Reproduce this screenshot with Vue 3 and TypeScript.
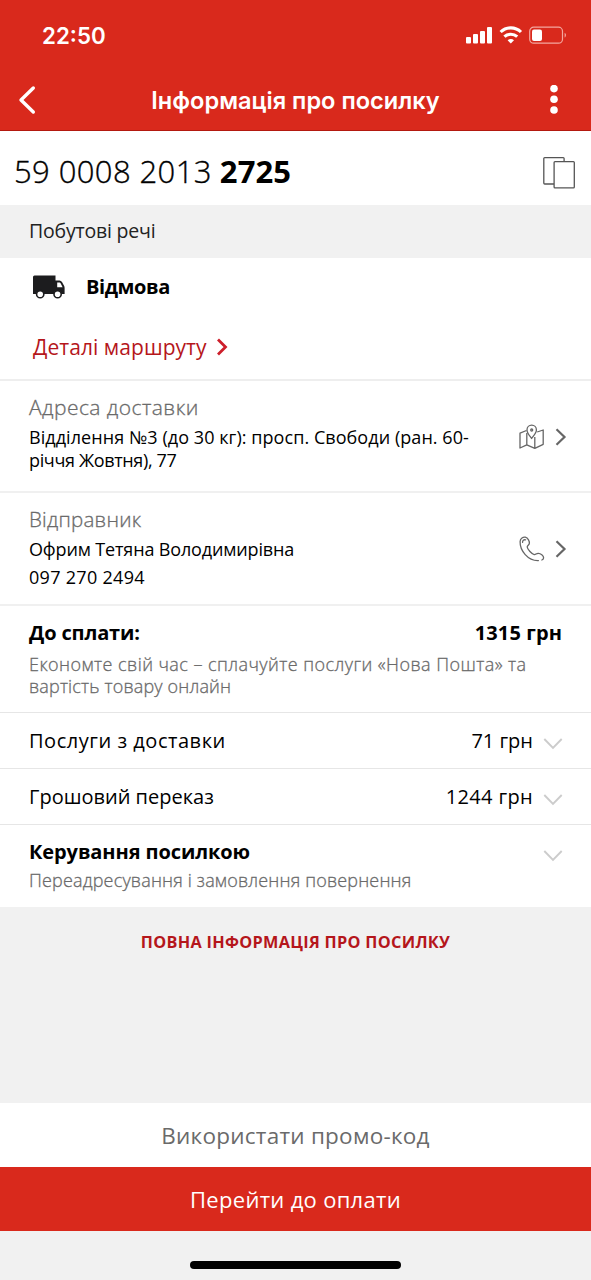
<script setup lang="ts">
interface ChargeRow {
  id: string
  label: string
  amount: string
}

const trackingPrefix = '59 0008 2013'
const trackingSuffix = '2725'

const charges: ChargeRow[] = [
  { id: 'delivery', label: 'Послуги з доставки', amount: '71 грн' },
  { id: 'transfer', label: 'Грошовий переказ', amount: '1244 грн' },
]
</script>

<template>
  <div class="screen">
    <header class="top">
      <div class="statusbar">
        <span class="time">22:50</span>
        <svg class="indicators" width="102" height="20" viewBox="0 0 102 20">
          <g fill="#fff">
            <rect x="1" y="12" width="5" height="6.5" rx="1" />
            <rect x="8" y="9" width="5" height="9.5" rx="1" />
            <rect x="15" y="6" width="5" height="12.5" rx="1" />
            <rect x="22" y="2" width="5" height="16.5" rx="1" />
            <path d="M45.8 18.6l-3.2-3.3a4.6 4.6 0 0 1 6.4 0z" />
          </g>
          <g fill="none" stroke="#fff" stroke-width="3.1">
            <path d="M35.6 7a14.6 14.6 0 0 1 20.4 0" />
            <path d="M39.4 11.7a9.4 9.4 0 0 1 12.8 0" />
          </g>
          <rect x="64.7" y="2.2" width="32.8" height="16" rx="4" fill="none" stroke="#f3a69e" stroke-width="1.2" />
          <rect x="67" y="4.5" width="10" height="11.5" rx="2" fill="#fff" />
          <path d="M99.6 7.8c1.8.7 1.8 4 0 4.8z" fill="#f3a69e" />
        </svg>
      </div>
      <div class="navbar">
        <svg class="back" width="18" height="30" viewBox="0 0 18 30">
          <path d="M15.3 3L3 15l12.3 12" fill="none" stroke="#fff" stroke-width="3.4" stroke-linecap="round" stroke-linejoin="round" />
        </svg>
        <h1 class="title">Інформація про посилку</h1>
        <svg class="more" width="10" height="30" viewBox="0 0 10 30">
          <g fill="#fff">
            <circle cx="5" cy="3.6" r="3.8" />
            <circle cx="5" cy="14.3" r="3.8" />
            <circle cx="5" cy="25" r="3.8" />
          </g>
        </svg>
      </div>
    </header>

    <section class="number">
      <p class="digits"><span class="prefix">{{ trackingPrefix }}</span><b class="suffix">{{ trackingSuffix }}</b></p>
      <svg class="copy" width="34" height="34" viewBox="0 0 34 34" fill="none" stroke="#555" stroke-width="1.3">
        <path d="M12 28H2.7a.9.9 0 0 1-.9-.9V2.6a.9.9 0 0 1 .9-.9h18.5a.9.9 0 0 1 .9.9v3.1" />
        <rect x="12.1" y="5.7" width="20.2" height="26.2" rx=".9" />
      </svg>
    </section>

    <section class="category"><span class="t-category">Побутові речі</span></section>

    <section class="state">
      <div class="state-line">
        <svg width="32" height="24" viewBox="0 0 32 24">
          <path d="M1.5.5H22.5V5.5H26.5Q28 5.5 29 7L31.2 11Q31.6 12 31.6 13V19H0V2Q0 .5 1.5.5z" fill="#1c1c1e" />
          <path d="M24.2 7.5h2.4q.6 0 1 .8l2 3.9h-5.4z" fill="#fff" />
          <circle cx="7.2" cy="19.2" r="3.6" fill="#fff" stroke="#1c1c1e" stroke-width="1.6" />
          <circle cx="24.6" cy="19.2" r="3.6" fill="#fff" stroke="#1c1c1e" stroke-width="1.6" />
        </svg>
        <b class="t-state">Відмова</b>
      </div>
      <div class="route">
        <span class="t-route">Деталі маршруту</span>
        <svg width="12" height="20" viewBox="0 0 12 20">
          <path d="M2 2.5l7.5 7.5L2 17.5" fill="none" stroke="#cd1f2b" stroke-width="2.8" />
        </svg>
      </div>
    </section>

    <section class="party address">
      <div class="party-text">
        <span class="caption t-address">Адреса доставки</span>
        <span class="body t-addr1">Відділення №3 (до 30 кг): просп. Свободи (ран. 60-</span>
        <span class="body t-addr2">річчя Жовтня), 77</span>
      </div>
      <div class="party-icons">
        <svg width="26" height="26" viewBox="0 0 26 26" fill="none" stroke="#666" stroke-width="1.3" stroke-linejoin="round">
          <path d="M7.5 6.5L1 9.2V24l6.8-3.2 8 3.5 8.4-4V6l-6 2M7.8 9v11.8M15.8 13v11.3" />
          <path d="M12.6 14.5C10.5 11.5 8 9 8 5.9a4.7 4.7 0 0 1 9.4 0c0 3.1-2.7 5.6-4.8 8.6z" />
          <circle cx="12.7" cy="6" r="1" />
        </svg>
        <svg width="14" height="20" viewBox="0 0 14 20"><path d="M2.5 2.3l8 7.7-8 7.7" fill="none" stroke="#666" stroke-width="2.2" /></svg>
      </div>
    </section>

    <section class="party sender">
      <div class="party-text">
        <span class="caption t-sender">Відправник</span>
        <span class="body t-name">Офрим Тетяна Володимирівна</span>
        <span class="body t-phone">097 270 2494</span>
      </div>
      <div class="party-icons">
        <svg width="26" height="26" viewBox="0 0 26 26" fill="none" stroke="#666" stroke-width="1.3" stroke-linecap="round" stroke-linejoin="round">
          <path d="M19.4 24.6C9 25 .8 14.5 1.1 5.5C1.2 2.3 4.2.8 6.3 1.2C9 1.8 10.8 5.5 10.3 7.6C10 9.1 8.1 9.6 8.2 11C8.4 13.3 13 18.3 15.2 18.6C16.8 18.8 17.3 17.2 19.3 17.3C21.6 17.4 24.6 19.6 24.6 21.8C24.6 22.7 23.9 23.6 22.9 24" />
          <path d="M3.6 6.3C3.3 4.4 4.8 3.3 6.6 3.9" />
        </svg>
        <svg width="14" height="20" viewBox="0 0 14 20"><path d="M2.5 2.3l8 7.7-8 7.7" fill="none" stroke="#666" stroke-width="2.2" /></svg>
      </div>
    </section>

    <section class="total">
      <div class="total-line">
        <b class="t-total">До сплати:</b>
        <b class="t-sum">1315 грн</b>
      </div>
      <span class="note t-note1">Економте свій час – сплачуйте послуги «Нова Пошта» та</span>
      <span class="note t-note2">вартість товару онлайн</span>
    </section>

    <section v-for="row in charges" :key="row.id" :class="['charge', row.id]">
      <span class="charge-label">{{ row.label }}</span>
      <span class="charge-amount">{{ row.amount }}</span>
      <svg class="down" width="20" height="14" viewBox="0 0 20 14"><path d="M1.3 2l8.7 9L18.7 2" fill="none" stroke="#ccc" stroke-width="1.9" /></svg>
    </section>

    <section class="manage">
      <div class="manage-line">
        <b class="t-manage">Керування посилкою</b>
        <svg class="down" width="20" height="14" viewBox="0 0 20 14"><path d="M1.3 2l8.7 9L18.7 2" fill="none" stroke="#ccc" stroke-width="1.9" /></svg>
      </div>
      <span class="note t-redirect">Переадресування і замовлення повернення</span>
    </section>

    <div class="full"><span class="t-full">ПОВНА ІНФОРМАЦІЯ ПРО ПОСИЛКУ</span></div>

    <button class="promo"><span class="t-promo">Використати промо-код</span></button>
    <button class="pay"><span class="t-pay">Перейти до оплати</span></button>
    <footer class="home"><i class="home-bar"></i></footer>
  </div>
</template>

<style>
body {
  margin: 0;
}
</style>

<style scoped>
.screen {
  display: flex;
  flex-direction: column;
  width: 591px;
  height: 1280px;
  overflow: hidden;
  background: #f1f1f1;
  color: #000;
  font-family: "Open Sans", "Noto Sans", sans-serif;
  font-size: 20px;
  font-weight: 400;
  white-space: nowrap;
}
.screen * {
  box-sizing: border-box;
}
section,
header,
button,
footer {
  flex: none;
}
.top {
  height: 131px;
  background: #d9291c;
  border-bottom: 1px solid #b3190f;
  color: #fff;
  font-family: Inter, sans-serif;
}
.statusbar {
  display: flex;
  justify-content: space-between;
  height: 70px;
  padding: 25px 24px 0 42px;
}
.time {
  font-size: 22.3px;
  font-weight: 600;
  line-height: 22px;
}
.navbar {
  display: flex;
  align-items: center;
  justify-content: space-between;
  height: 60px;
  padding: 0 32px 0 18px;
}
.title {
  margin: 2px 0 0 6px;
  font-size: 23.6px;
  font-weight: 600;
  line-height: 30px;
}
.number {
  display: flex;
  align-items: flex-start;
  justify-content: space-between;
  height: 74px;
  padding: 24px 15px 0 14px;
  background: #fff;
}
.copy {
  margin-top: 1px;
}
.digits {
  display: flex;
  gap: 8px;
  margin: 0;
  font-size: 31px;
  line-height: 32px;
}
.prefix {
  font-weight: 300;
  letter-spacing: 0.4px;
  -webkit-text-stroke: 0.35px currentColor;
}
.suffix {
  letter-spacing: 0.1px;
}
.category {
  height: 53px;
  padding-left: 29px;
  color: #222;
  font-size: 19.5px;
  letter-spacing: -0.2px;
  line-height: 52px;
}
.state {
  display: flex;
  flex-direction: column;
  height: 123px;
  padding: 16px 33px 0;
  background: #fff;
  border-bottom: 2px solid #eee;
}
.state-line {
  display: flex;
  align-items: center;
  gap: 21px;
  height: 26px;
}
.t-state {
  letter-spacing: -0.4px;
  line-height: 26px;
}
.route {
  display: flex;
  align-items: center;
  gap: 9px;
  height: 28px;
  margin-top: 33px;
  color: #b5161b;
  font-size: 21px;
}
.t-route {
  letter-spacing: 0.05px;
  padding-bottom: 1px;
}
.party {
  display: flex;
  justify-content: space-between;
  background: #fff;
  border-bottom: 2px solid #f0f0f0;
  padding: 14px 23px 0 29px;
}
.address {
  height: 112px;
}
.sender {
  height: 113px;
}
.party-text {
  display: flex;
  flex-direction: column;
  align-items: flex-start;
}
.caption {
  color: #6a6a6a;
  font-weight: 300;
  line-height: 24px;
  -webkit-text-stroke: 0.3px currentColor;
}
.t-address {
  font-size: 21px;
  letter-spacing: 0.45px;
}
.t-sender {
  font-size: 20.5px;
  letter-spacing: 0.25px;
}
.body {
  font-size: 18px;
}
.t-addr1 {
  margin-top: 7px;
  letter-spacing: 0.06px;
  line-height: 23px;
}
.t-addr2 {
  letter-spacing: -0.35px;
  line-height: 22px;
}
.t-name {
  margin-top: 4px;
  letter-spacing: -0.15px;
  line-height: 28px;
}
.t-phone {
  letter-spacing: 0.3px;
  line-height: 28px;
}
.party-icons {
  display: flex;
  align-items: center;
  gap: 9px;
  height: 30px;
  margin-top: 27px;
}
.total {
  display: flex;
  flex-direction: column;
  align-items: flex-start;
  height: 107px;
  padding: 14px 29px 0;
  background: #fff;
  border-bottom: 1px solid #e6e6e6;
}
.total-line,
.manage-line {
  display: flex;
  justify-content: space-between;
  align-self: stretch;
  height: 26px;
  line-height: 26px;
}
.t-total {
  letter-spacing: -0.15px;
}
.t-sum {
  letter-spacing: 0.1px;
}
.note {
  color: #6a6a6a;
  font-size: 18px;
  font-weight: 300;
  line-height: 23px;
  -webkit-text-stroke: 0.3px currentColor;
}
.t-note1 {
  margin-top: 7px;
  letter-spacing: 0.44px;
}
.t-note2 {
  letter-spacing: 0.16px;
  line-height: 21px;
}
.charge {
  display: flex;
  align-items: center;
  height: 56px;
  padding: 0 28px 0 29px;
  background: #fff;
  border-bottom: 1px solid #e6e6e6;
}
.delivery .charge-label {
  letter-spacing: 0.53px;
}
.charge-amount {
  margin-left: auto;
  margin-right: 10px;
}
.transfer .charge-amount {
  letter-spacing: 0.35px;
}
.charge .down {
  margin-top: 6px;
}
.manage {
  height: 82px;
  padding: 14px 28px 0 29px;
  background: #fff;
}
.t-manage {
  letter-spacing: -0.1px;
}
.manage .down {
  margin-top: 10px;
}
.t-redirect {
  display: block;
  margin-top: 4px;
  letter-spacing: 0.17px;
}
.full {
  flex: 1;
  padding-top: 23px;
  color: #b5161b;
  font-size: 16.3px;
  font-weight: 700;
  letter-spacing: 0.3px;
  line-height: 25px;
  text-align: center;
}
.promo,
.pay {
  height: 64px;
  border: 0;
  padding: 0;
  font-family: inherit;
  line-height: 63px;
}
.promo {
  background: #fff;
  color: #6a6a6a;
  font-size: 22.5px;
  letter-spacing: 0.25px;
}
.pay {
  background: #d9291c;
  color: #fff;
  font-size: 22px;
  letter-spacing: 0.3px;
}
.home {
  display: flex;
  justify-content: center;
  height: 49px;
  padding-top: 30px;
}
.home-bar {
  width: 211px;
  height: 8px;
  border-radius: 4px;
  background: #000;
}
</style>
